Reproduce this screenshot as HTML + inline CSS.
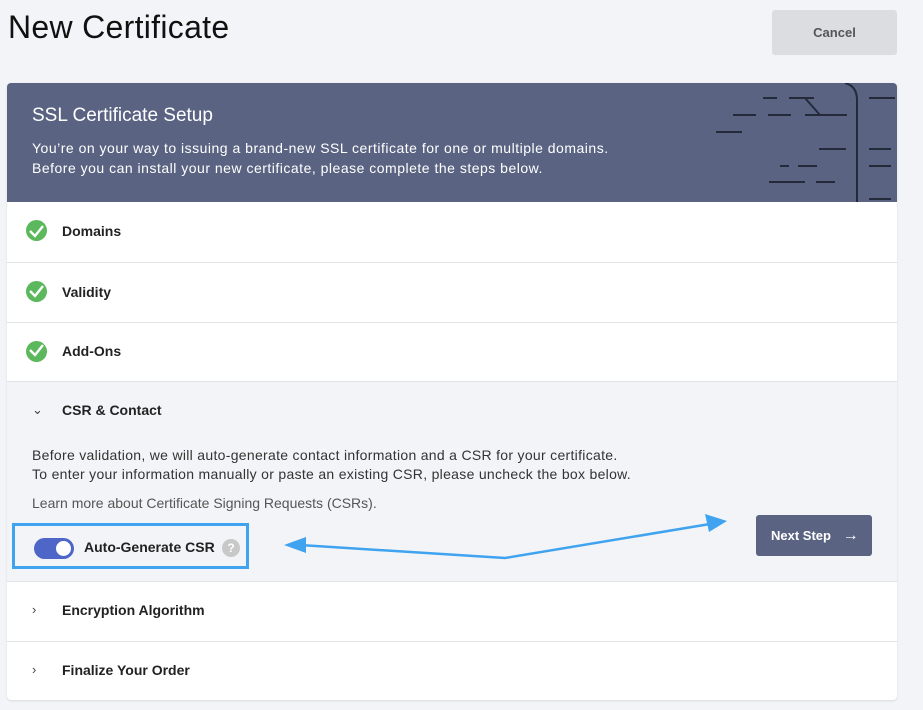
<!DOCTYPE html>
<html><head><meta charset="utf-8"><style>
*{box-sizing:border-box;margin:0;padding:0}
body{width:923px;height:710px;background:#f3f4f7;font-family:"Liberation Sans",sans-serif;position:relative;overflow:hidden;color:#222}
h1{position:absolute;left:8px;top:9px;font-size:32px;font-weight:400;color:#111;letter-spacing:0.3px}
.cancel{position:absolute;left:772px;top:10px;width:125px;height:45px;background:#dcdde1;border-radius:3px;font-size:13px;font-weight:bold;color:#555;text-align:center;line-height:45px}
.card{position:absolute;left:7px;top:83px;width:890px;height:617px;background:#fff;border-radius:4px;overflow:hidden;box-shadow:0 1px 2px rgba(0,0,0,.1)}
.hdr{position:absolute;left:0;top:0;width:890px;height:119px;background:#5a6482;color:#fff}
.hdr h2{position:absolute;left:25px;top:22px;font-size:19px;font-weight:400}
.hdr p{position:absolute;left:25px;top:55px;font-size:14px;line-height:20px;letter-spacing:0.5px}
.row{position:absolute;left:0;width:890px;border-top:1px solid #e3e4e8;font-size:14px;font-weight:bold;color:#222}
.row span{position:absolute;left:55px}
.chk{position:absolute;left:19px;width:21px;height:21px;border-radius:50%;background:#5cb85c}
.csr{background:#f3f4f7}
.small{position:absolute;left:25px;font-size:14px;color:#333;font-weight:400;letter-spacing:0.3px}
.chev{position:absolute;left:25px;font-weight:400;color:#444;font-size:13px}
</style></head><body>
<h1>New Certificate</h1>
<div class="cancel">Cancel</div>
<div class="card">
<div class="hdr">
<h2>SSL Certificate Setup</h2>
<p>You’re on your way to issuing a brand-new SSL certificate for one or multiple domains.<br>Before you can install your new certificate, please complete the steps below.</p>
<svg width="890" height="119" style="position:absolute;left:0;top:0" stroke="#242a3a" stroke-width="2" fill="none">
<g transform="translate(-7,-83)">
<path d="M763 98H777M789 98H814M805 98L820 115M733 115H756M768 115H791M805 115H847M716 132H742M819 149H846M780 166H789M798 166H817M769 182H805M816 182H835M869 98H895M869 149H891M869 166H891M869 199H891"/>
<path d="M845 83Q857 86 857 100V202"/>
</g></svg>
</div>
<div class="row" style="top:119px;height:60px;border-top:none"><div class="chk" style="top:18px"></div><span style="top:21px">Domains</span></div>
<div class="row" style="top:179px;height:60px"><div class="chk" style="top:18px"></div><span style="top:21px">Validity</span></div>
<div class="row" style="top:239px;height:59px"><div class="chk" style="top:18px"></div><span style="top:20px">Add-Ons</span></div>
<div class="row csr" style="top:298px;height:200px">
<div class="chev" style="top:20px">⌄</div><span style="top:20px">CSR &amp; Contact</span>
<div class="small" style="top:64px;line-height:19px">Before validation, we will auto-generate contact information and a CSR for your certificate.<br>To enter your information manually or paste an existing CSR, please uncheck the box below.</div>
<div class="small" style="top:113px;color:#555;letter-spacing:0">Learn more about Certificate Signing Requests (CSRs).</div>
<div style="position:absolute;left:5px;top:141px;width:237px;height:46px;border:3px solid #3fa3f0"></div>
<div style="position:absolute;left:27px;top:156px;width:40px;height:21px;border-radius:11px;background:#4e66c8"><div style="position:absolute;right:3px;top:3px;width:15px;height:15px;border-radius:50%;background:#fff"></div></div>
<span style="left:77px;top:157px">Auto-Generate CSR</span>
<div style="position:absolute;left:215px;top:157px;width:18px;height:18px;border-radius:50%;background:#c8c8c8;color:#fff;font-size:12px;text-align:center;line-height:18px">?</div>
<div style="position:absolute;left:749px;top:133px;width:116px;height:41px;background:#5a6482;border-radius:3px;color:#fff;font-size:13px;line-height:41px;padding-left:15px">Next Step <span style="position:static;margin-left:8px;font-weight:400;font-size:16px">→</span></div>
</div>
<div class="row" style="top:498px;height:60px"><div class="chev" style="top:20px">›</div><span style="top:20px">Encryption Algorithm</span></div>
<div class="row" style="top:558px;height:59px"><div class="chev" style="top:20px">›</div><span style="top:20px">Finalize Your Order</span></div>
</div>
<svg width="923" height="710" style="position:absolute;left:0;top:0" fill="#3fa3f0" stroke="#3fa3f0" stroke-width="2.5">
<path d="M300 545L505 558L710 524" fill="none"/>
<path d="M284 545L306 537L306 553Z" stroke="none"/>
<path d="M727 521L705 514L709 532Z" stroke="none"/>
</svg>
<svg width="923" height="710" style="position:absolute;left:0;top:0" fill="none" stroke="#fff" stroke-width="2.4">
<path d="M30 231L35 236L43 226M30 291L35 296L43 286M30 350L35 355L43 345"/>
</svg>
</body></html>
